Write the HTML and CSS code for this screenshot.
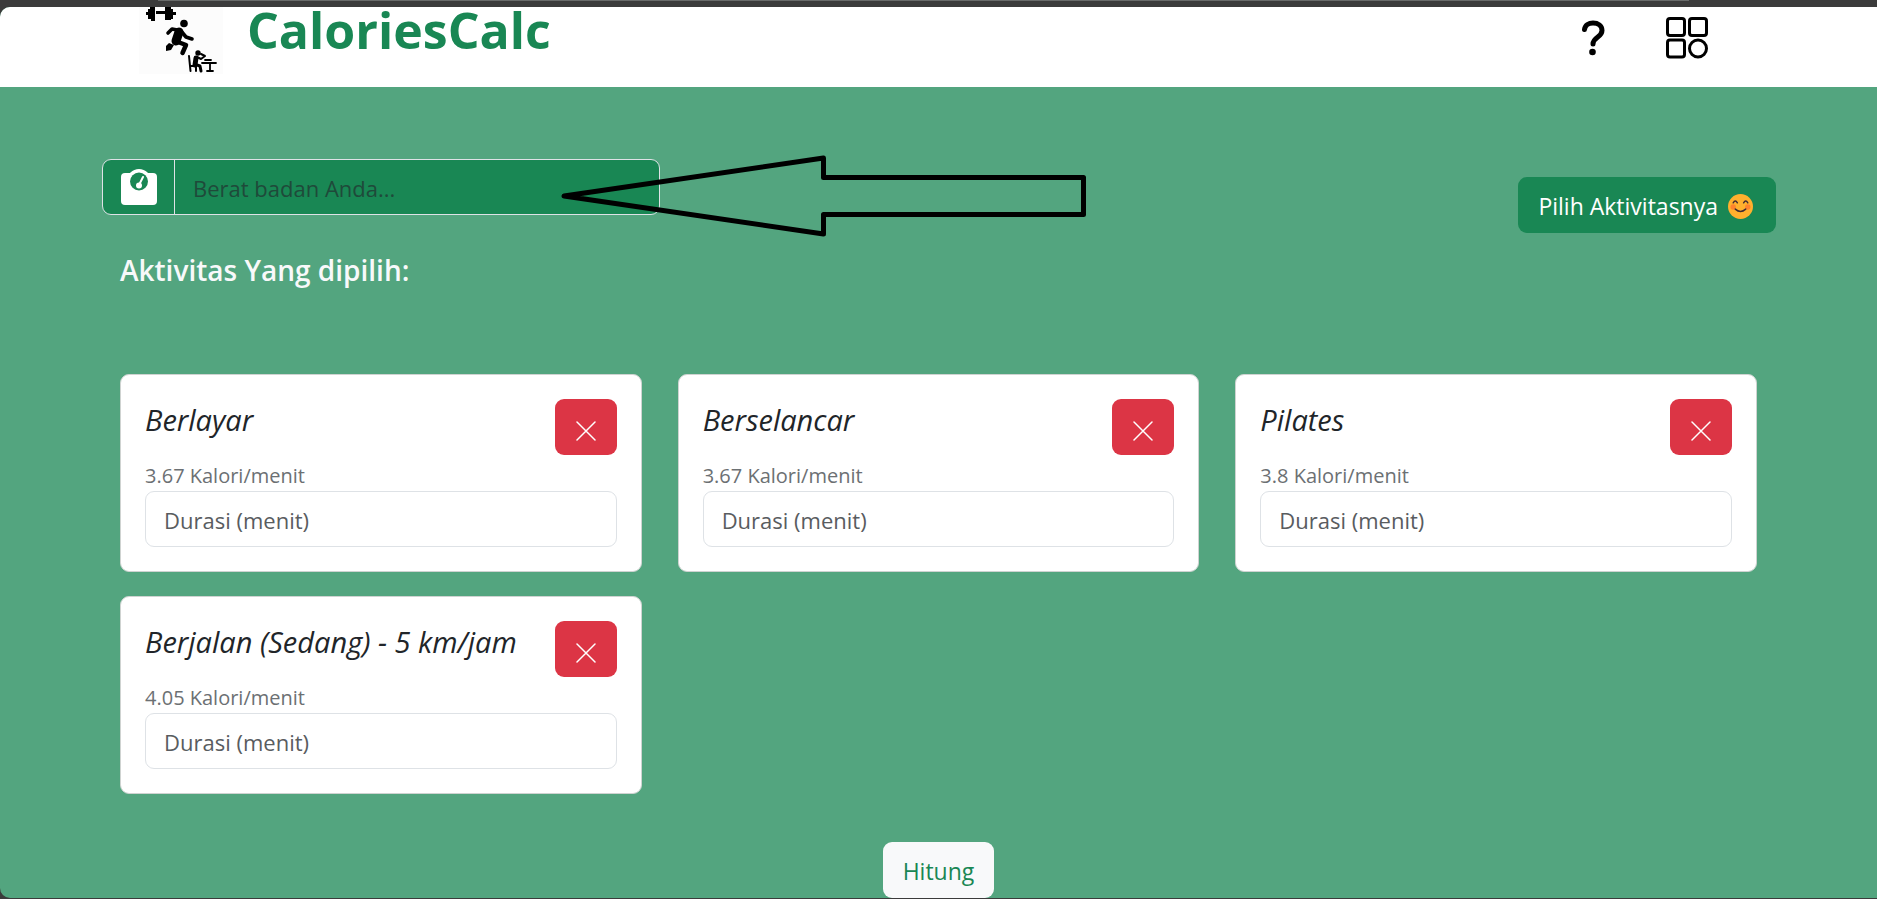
FILE: index.html
```
<!DOCTYPE html>
<html lang="id">
<head>
<meta charset="utf-8">
<meta name="viewport" content="width=device-width, initial-scale=1">
<title>CaloriesCalc</title>
<link rel="stylesheet" href="styles.css">
</head>
<body>
<div class="window-edge"></div>
<div class="page">
  <header class="header">
    <a class="brand" href="#">
      <svg class="logo" viewBox="0 0 84 67" aria-hidden="true">
        <rect width="84" height="67" fill="#fcfcfc"/>
        <path d="M7 5h2V2h2V0h5v14h-4v-2H9V8H7zM17 4h9v3h-9zM26 0h6v2h2v3h3v3h-3v4h-2v1h-6z"/>
        <circle cx="45" cy="16.500" r="3.800"/>
        <g fill="none" stroke="#000" stroke-linecap="round" stroke-linejoin="round">
          <path d="M29 26l4-4 8 1.500" stroke-width="3.600"/>
          <path d="M42 24l5 6 6 2" stroke-width="3.600"/>
          <path d="M40 25l-3 9" stroke-width="9"/>
          <path d="M39 35l8 3-3.500 8" stroke-width="4.500"/>
        </g>
        <path d="M27 39l3-3 5 2-3 5-5 1z"/>
        <circle cx="59" cy="46" r="2.700"/>
        <g fill="none" stroke="#000" stroke-linecap="round" stroke-linejoin="round">
          <path d="M50 49l1.500 15M51 59h6v5" stroke-width="2"/>
          <path d="M57 51l-1 7" stroke-width="5"/>
          <path d="M58 50l4 2 4-3-4-2" stroke-width="2"/>
          <path d="M58 58l3 1 1 5" stroke-width="3"/>
          <path d="M63 56h14M71 56v8M68 64h6M66 53h6" stroke-width="1.800"/>
        </g>
      </svg>
      <span class="brand-name">CaloriesCalc</span>
    </a>
    <nav class="actions">
      <button class="icon-button" type="button" aria-label="Bantuan">
        <svg width="24" height="36" viewBox="0 0 24 36" aria-hidden="true">
          <path d="M3.500 9.500C4 5 8 3 12 3c5 0 9 2.500 9 7.500 0 7-9 6.500-9 13.500" fill="none" stroke="#000" stroke-width="5" stroke-linecap="round"/>
          <circle cx="11.500" cy="32" r="3.300"/>
        </svg>
      </button>
      <button class="icon-button" type="button" aria-label="Menu">
        <svg width="42" height="42" viewBox="0 0 42 42" fill="none" stroke="#000" stroke-width="3" aria-hidden="true">
          <rect x="1.500" y="1.500" width="17" height="17" rx="2.500"/>
          <rect x="23.500" y="1.500" width="17" height="17" rx="2.500"/>
          <rect x="1.500" y="23" width="17" height="17" rx="2.500"/>
          <circle cx="32" cy="31.500" r="8.500"/>
        </svg>
      </button>
    </nav>
  </header>

  <main class="main">
    <div class="toolbar">
      <div class="weight">
        <label class="weight-icon" for="weight" aria-label="Berat badan">
          <svg width="36" height="36" viewBox="0 0 36 36" aria-hidden="true">
            <rect y="4" width="36" height="32" rx="4" fill="#fff"/>
            <circle cx="18" cy="12" r="12" fill="#fff"/>
            <circle cx="18" cy="12.500" r="9" fill="#198754"/>
            <circle cx="18" cy="16.500" r="3" fill="#fff"/>
            <path d="M18 16l4-8" stroke="#fff" stroke-width="2" stroke-linecap="round"/>
          </svg>
        </label>
        <input class="weight-input" id="weight" type="text" placeholder="Berat badan Anda...">
      </div>
      <button class="button button-green" type="button">Pilih Aktivitasnya
        <svg width="25" height="25" viewBox="0 0 24 24" aria-hidden="true">
          <circle cx="12" cy="12" r="12" fill="#ffb02e"/>
          <circle cx="5" cy="12.500" r="2.600" fill="#ff822d"/>
          <circle cx="19" cy="12.500" r="2.600" fill="#ff822d"/>
          <path d="M5 8.500q2-3.500 4 0M15 8.500q2-3.500 4 0M7 14.500q5 4.500 10 0" fill="none" stroke="#402a32" stroke-width="1.400" stroke-linecap="round"/>
        </svg>
      </button>
    </div>

    <h2 class="section-title">Aktivitas Yang dipilih:</h2>

    <div class="cards">
      <article class="card">
        <div class="card-head">
          <h3 class="card-title">Berlayar</h3>
          <button class="remove" type="button" aria-label="Hapus Berlayar"><svg width="20" height="20" viewBox="0 0 20 20" aria-hidden="true"><path d="M1 1l18 18M19 1L1 19"/></svg></button>
        </div>
        <p class="rate">3.67 Kalori/menit</p>
        <input class="duration" type="text" placeholder="Durasi (menit)" aria-label="Durasi Berlayar">
      </article>
      <article class="card">
        <div class="card-head">
          <h3 class="card-title">Berselancar</h3>
          <button class="remove" type="button" aria-label="Hapus Berselancar"><svg width="20" height="20" viewBox="0 0 20 20" aria-hidden="true"><path d="M1 1l18 18M19 1L1 19"/></svg></button>
        </div>
        <p class="rate">3.67 Kalori/menit</p>
        <input class="duration" type="text" placeholder="Durasi (menit)" aria-label="Durasi Berselancar">
      </article>
      <article class="card">
        <div class="card-head">
          <h3 class="card-title">Pilates</h3>
          <button class="remove" type="button" aria-label="Hapus Pilates"><svg width="20" height="20" viewBox="0 0 20 20" aria-hidden="true"><path d="M1 1l18 18M19 1L1 19"/></svg></button>
        </div>
        <p class="rate">3.8 Kalori/menit</p>
        <input class="duration" type="text" placeholder="Durasi (menit)" aria-label="Durasi Pilates">
      </article>
      <article class="card">
        <div class="card-head">
          <h3 class="card-title">Berjalan (Sedang) - 5 km/jam</h3>
          <button class="remove" type="button" aria-label="Hapus Berjalan"><svg width="20" height="20" viewBox="0 0 20 20" aria-hidden="true"><path d="M1 1l18 18M19 1L1 19"/></svg></button>
        </div>
        <p class="rate">4.05 Kalori/menit</p>
        <input class="duration" type="text" placeholder="Durasi (menit)" aria-label="Durasi Berjalan">
      </article>
    </div>

    <button class="button button-light" type="button">Hitung</button>

    <svg class="arrow" width="530" height="84" viewBox="0 0 530 84" aria-hidden="true">
      <path d="M4 42L263.500 4V23.500H523.500V60.500H263.500V80Z" fill="none" stroke="#000" stroke-width="5" stroke-linejoin="round"/>
    </svg>
  </main>
</div>
</body>
</html>
```
FILE: styles.css
```
* {
  box-sizing: border-box;
}

body {
  margin: 0;
  min-height: 100vh;
  display: flex;
  flex-direction: column;
  background: #3b3b3b;
  color: #212529;
  font-family: "Open Sans", "Noto Sans", sans-serif;
  font-size: 22px;
}

.window-edge {
  flex: none;
  height: 7px;
  margin: 0 10% 0 158px;
  border-top: 1px solid #696b6a;
}

.page {
  flex: 1;
  display: flex;
  flex-direction: column;
  margin-bottom: 1px;
  border-radius: 10px 0 0 10px;
  background: #53a57f;
}

.header {
  display: flex;
  justify-content: space-between;
  align-items: flex-start;
  height: 80px;
  padding: 0 169px 0 139px;
  border-top-left-radius: 10px;
  background: #fff;
}

.brand {
  display: flex;
  gap: 24px;
  color: #198754;
  text-decoration: none;
}

.logo {
  width: 84px;
  height: 67px;
}

.brand-name {
  font-size: 50px;
  font-weight: 700;
  line-height: 46px;
}

.actions {
  display: flex;
  align-items: center;
  gap: 61px;
  padding-top: 10px;
}

.icon-button {
  display: flex;
  padding: 0;
  border: 0;
  background: none;
}

.main {
  position: relative;
  flex: 1;
  display: flex;
  flex-direction: column;
  padding-top: 72px;
}

.toolbar {
  display: flex;
  justify-content: space-between;
  align-items: flex-start;
  padding: 0 101px 0 102px;
}

.weight {
  display: flex;
  width: calc(100% / 3);
  height: 56px;
  border: 1px solid #dee2e6;
  border-radius: 9px;
  background: #198754;
}

.weight-icon {
  display: flex;
  align-items: center;
  padding: 0 17px 0 18px;
  border-right: 1px solid #dee2e6;
}

.weight-input {
  flex: 1;
  min-width: 0;
  padding: 2px 18px 0;
  border: 0;
  background: none;
  font: inherit;
}

.weight-input::placeholder {
  color: #1f4a3a;
  opacity: 1;
}

.button {
  display: flex;
  align-items: center;
  gap: 10px;
  height: 56px;
  padding: 2px 20px 0;
  border: 0;
  border-radius: 9px;
  font-family: inherit;
  font-size: 23px;
}

.button-green {
  margin-top: 18px;
  padding-right: 23px;
  background: #198754;
  color: #fff;
}

.button-light {
  align-self: center;
  margin-top: 48px;
  background: #f8f9fa;
  color: #198754;
}

.section-title {
  margin: 19px 120px 0;
  color: #f8f9fa;
  font-size: 28px;
  font-weight: 600;
  line-height: 36px;
}

.cards {
  display: grid;
  grid-template-columns: repeat(3, 1fr);
  gap: 24px 36px;
  margin: 86px 120px 0;
}

.card {
  padding: 24px;
  border: 1px solid #cfd3d1;
  border-radius: 9px;
  background: #fff;
}

.card-head {
  display: flex;
  justify-content: space-between;
  align-items: flex-start;
}

.card-title {
  margin: 0;
  font-size: 29px;
  font-style: italic;
  font-weight: 500;
  line-height: 42px;
  white-space: nowrap;
}

.remove {
  display: flex;
  justify-content: center;
  align-items: center;
  width: 62px;
  height: 56px;
  padding: 8px 0 0;
  border: 0;
  border-radius: 9px;
  background: #dc3545;
}

.remove path {
  stroke: #fff;
  stroke-width: 1.500;
  stroke-linecap: round;
}

.rate {
  margin: 6px 0 0;
  color: #6c7073;
  font-size: 20px;
  line-height: 30px;
}

.duration {
  display: block;
  width: 100%;
  height: 56px;
  padding: 2px 18px 0;
  border: 1px solid #dee2e6;
  border-radius: 9px;
  background: #fff;
  font: inherit;
}

.duration::placeholder {
  color: #595c5f;
  opacity: 1;
}

.arrow {
  position: absolute;
  top: 67px;
  left: 560px;
}
```
